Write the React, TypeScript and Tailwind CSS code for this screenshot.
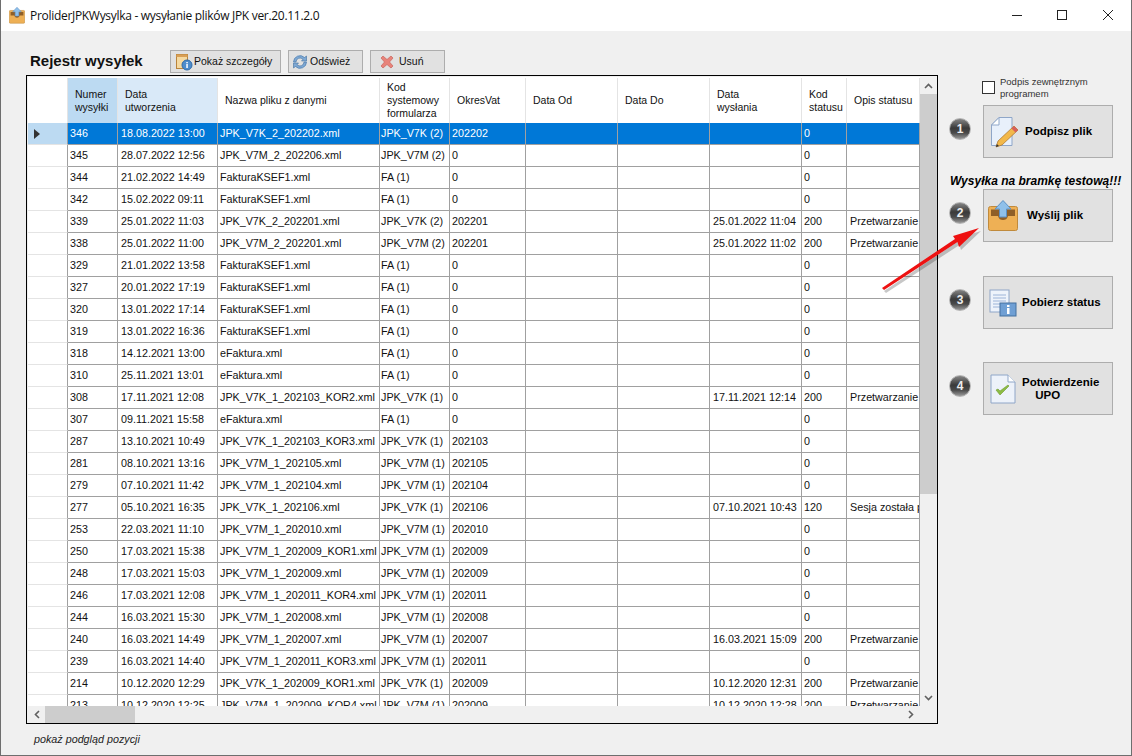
import type { ReactNode } from "react";

const sans = "font-['Liberation_Sans',Arial,sans-serif]";

const cols = "grid grid-cols-[40px_50px_100px_162px_70px_76px_92px_92px_92px_45px_73px]";

const PRZ = "Przetwarzanie dokumentu";

type Row = [string, string, string, string, string, string?, string?, string?];

const rows: Row[] = [
  ["346", "18.08.2022 13:00", "JPK_V7K_2_202202.xml", "JPK_V7K (2)", "202202", "", "0", ""],
  ["345", "28.07.2022 12:56", "JPK_V7M_2_202206.xml", "JPK_V7M (2)", "0", "", "0", ""],
  ["344", "21.02.2022 14:49", "FakturaKSEF1.xml", "FA (1)", "0", "", "0", ""],
  ["342", "15.02.2022 09:11", "FakturaKSEF1.xml", "FA (1)", "0", "", "0", ""],
  ["339", "25.01.2022 11:03", "JPK_V7K_2_202201.xml", "JPK_V7K (2)", "202201", "25.01.2022 11:04", "200", PRZ],
  ["338", "25.01.2022 11:00", "JPK_V7M_2_202201.xml", "JPK_V7M (2)", "202201", "25.01.2022 11:02", "200", PRZ],
  ["329", "21.01.2022 13:58", "FakturaKSEF1.xml", "FA (1)", "0", "", "0", ""],
  ["327", "20.01.2022 17:19", "FakturaKSEF1.xml", "FA (1)", "0", "", "0", ""],
  ["320", "13.01.2022 17:14", "FakturaKSEF1.xml", "FA (1)", "0", "", "0", ""],
  ["319", "13.01.2022 16:36", "FakturaKSEF1.xml", "FA (1)", "0", "", "0", ""],
  ["318", "14.12.2021 13:00", "eFaktura.xml", "FA (1)", "0", "", "0", ""],
  ["310", "25.11.2021 13:01", "eFaktura.xml", "FA (1)", "0", "", "0", ""],
  ["308", "17.11.2021 12:08", "JPK_V7K_1_202103_KOR2.xml", "JPK_V7K (1)", "0", "17.11.2021 12:14", "200", PRZ],
  ["307", "09.11.2021 15:58", "eFaktura.xml", "FA (1)", "0", "", "0", ""],
  ["287", "13.10.2021 10:49", "JPK_V7K_1_202103_KOR3.xml", "JPK_V7K (1)", "202103", "", "0", ""],
  ["281", "08.10.2021 13:16", "JPK_V7M_1_202105.xml", "JPK_V7M (1)", "202105", "", "0", ""],
  ["279", "07.10.2021 11:42", "JPK_V7M_1_202104.xml", "JPK_V7M (1)", "202104", "", "0", ""],
  ["277", "05.10.2021 16:35", "JPK_V7K_1_202106.xml", "JPK_V7K (1)", "202106", "07.10.2021 10:43", "120", "Sesja została przyjęta"],
  ["253", "22.03.2021 11:10", "JPK_V7M_1_202010.xml", "JPK_V7M (1)", "202010", "", "0", ""],
  ["250", "17.03.2021 15:38", "JPK_V7M_1_202009_KOR1.xml", "JPK_V7M (1)", "202009", "", "0", ""],
  ["248", "17.03.2021 15:03", "JPK_V7M_1_202009.xml", "JPK_V7M (1)", "202009", "", "0", ""],
  ["246", "17.03.2021 12:08", "JPK_V7M_1_202011_KOR4.xml", "JPK_V7M (1)", "202011", "", "0", ""],
  ["244", "16.03.2021 15:30", "JPK_V7M_1_202008.xml", "JPK_V7M (1)", "202008", "", "0", ""],
  ["240", "16.03.2021 14:49", "JPK_V7M_1_202007.xml", "JPK_V7M (1)", "202007", "16.03.2021 15:09", "200", PRZ],
  ["239", "16.03.2021 14:40", "JPK_V7M_1_202011_KOR3.xml", "JPK_V7M (1)", "202011", "", "0", ""],
  ["214", "10.12.2020 12:29", "JPK_V7K_1_202009_KOR1.xml", "JPK_V7K (1)", "202009", "10.12.2020 12:31", "200", PRZ],
  ["213", "10.12.2020 12:25", "JPK_V7M_1_202009_KOR4.xml", "JPK_V7M (1)", "202009", "10.12.2020 12:28", "200", PRZ],
];

function Head({ children, className = "" }: { children: ReactNode; className?: string }) {
  return (
    <div className={`flex items-center border-r border-[#e4e4e4] pl-[7px] text-[10.5px] leading-[13px] text-[#111] ${className}`}>
      <div>{children}</div>
    </div>
  );
}

function Cell({ children, sel, className = "pl-[2px]" }: { children?: ReactNode; sel: boolean; className?: string }) {
  return (
    <div
      className={`flex items-center overflow-hidden whitespace-nowrap border-r border-b border-[#a0a0a0] text-[10.75px] ${className} ${
        sel ? "bg-[#0078d7] text-white" : "bg-white text-[#111]"
      }`}
    >
      {children}
    </div>
  );
}

function Tool({ icon, label, className }: { icon: ReactNode; label: string; className: string }) {
  return (
    <button className={`flex h-[23px] items-center border border-[#adadad] bg-[#e1e1e1] text-[10.5px] text-[#111] ${className}`}>
      {icon}
      {label}
    </button>
  );
}

function Step({ n, icon, children, top }: { n: number; icon: ReactNode; children: ReactNode; top: string }) {
  return (
    <div className={`flex items-center ${top}`}>
      <div className="mb-[5px] flex h-[22px] w-[22px] items-center justify-center rounded-full border border-[#b5b5b5] bg-[linear-gradient(#858585,#3a3a3a_45%,#4a4a4a_70%,#9a9a9a)] text-[12px] font-bold text-[#eee]">
        {n}
      </div>
      <button className="ml-[12px] flex h-[53px] w-[130px] items-center border border-[#adadad] bg-[#e1e1e1] text-[11.5px] font-bold leading-[13px] text-black">
        {icon}
        {children}
      </button>
    </div>
  );
}

function BoxIcon({ size = 30 }: { size?: number }) {
  return (
    <svg width={size} height={size * 31 / 30} viewBox="0 0 30 31">
      <rect x="0.500" y="6.500" width="29" height="24" rx="2" fill="#eeb055" stroke="#c08a3c" />
      <path d="M3 9.500h24V16h-7c-1 3-2.500 4-5 4s-4-1-5-4H3z" fill="#8f5f28" />
      <path d="M15 0.500L23 9h-4.500v8h-7V9H7z" fill="#8fc0ea" stroke="#5c90c4" />
    </svg>
  );
}

export default function App() {
  return (
    <div className={`flex h-[756px] w-[1132px] flex-col overflow-hidden border-x border-b border-[#6e6e6e] bg-[#f0f0f0] ${sans}`}>
      {/* Title bar */}
      <div className="flex h-[31px] shrink-0 items-center bg-white pl-[8px]">
        <BoxIcon size={16} />
        <span className="ml-[5px] font-['Open_Sans',sans-serif] text-[12px] tracking-[-0.3px] text-[#111]">
          ProliderJPKWysylka - wysyłanie plików JPK ver.20.11.2.0
        </span>
        <div className="ml-auto flex items-center">
          <svg width="110" height="16" viewBox="0 0 110 16" className="mr-[13px]" fill="none" stroke="#222">
            <path d="M4 7.500h10" />
            <rect x="49.500" y="2.500" width="9" height="9" />
            <path d="M95 2l10 10M105 2L95 12" />
          </svg>
        </div>
      </div>

      <div className="relative flex flex-1">
        {/* Left column */}
        <div className="ml-[25px] flex w-[912px] flex-col">
          <div className="mt-[19px] flex h-[23px] items-center">
            <h1 className="ml-[4px] w-[140px] text-[15px] font-bold text-[#111]">Rejestr wysyłek</h1>
            <Tool
              className="w-[111px] pl-[4px]"
              label="Pokaż szczegóły"
              icon={
                <svg width="18" height="18" viewBox="0 0 18 18" className="mr-[1px]">
                  <rect x="1.500" y="1.500" width="11" height="14" fill="#f5d9a0" stroke="#b9843c" />
                  <rect x="1.500" y="1.500" width="11" height="2.500" fill="#d99f55" />
                  <circle cx="12" cy="12" r="5" fill="#4d8ccc" stroke="#2f6aa8" />
                  <rect x="11.300" y="11" width="1.500" height="4" fill="#fff" />
                  <rect x="11.300" y="9" width="1.500" height="1.300" fill="#fff" />
                </svg>
              }
            />
            <Tool
              className="ml-[7px] w-[75px] pl-[3px]"
              label="Odśwież"
              icon={
                <svg width="16" height="16" viewBox="0 0 16 16" className="mr-[2px]" fill="none">
                  <circle cx="8" cy="8" r="5.500" stroke="#cfe0f2" strokeWidth="2.500" />
                  <path d="M1.500 8A6.500 6.500 0 0 1 12.500 3.500L14.500 2v5h-5l1.500-1.600A4 4 0 0 0 4 8z" fill="#7fa9d4" stroke="#3f6f9f" strokeWidth=".6" />
                  <path d="M14.500 8A6.500 6.500 0 0 1 3.500 12.500L1.500 14V9h5L5 10.600A4 4 0 0 0 12 8z" fill="#7fa9d4" stroke="#3f6f9f" strokeWidth=".6" />
                </svg>
              }
            />
            <Tool
              className="ml-[7px] w-[75px] pl-[9px]"
              label="Usuń"
              icon={
                <svg width="14" height="14" viewBox="0 0 14 14" className="mr-[5px]">
                  <path d="M3 1l4 3.500L11 1l2 2-3.500 4L13 11l-2 2-4-3.500L3 13l-2-2 3.500-4L1 3z" fill="#e8837a" stroke="#c9645c" strokeWidth=".7" />
                </svg>
              }
            />
          </div>

          {/* Data grid */}
          <div className="mt-[2px] flex h-[649px] flex-col border border-black bg-[#f0f0f0] pl-[1px] pt-[1px]">
            <div className="flex min-h-0 flex-1">
              <div className="w-[892px] overflow-hidden bg-white pt-[1px]">
                <div className={`${cols} h-[45px] bg-white`}>
                  <div className="border-r border-[#e4e4e4]" />
                  <Head className="bg-[#bcdaf2]">Numer<br />wysyłki</Head>
                  <Head className="bg-[#d9e9f8]">Data<br />utworzenia</Head>
                  <Head>Nazwa pliku z danymi</Head>
                  <Head>Kod<br />systemowy<br />formularza</Head>
                  <Head>OkresVat</Head>
                  <Head>Data Od</Head>
                  <Head>Data Do</Head>
                  <Head>Data<br />wysłania</Head>
                  <Head>Kod<br />statusu</Head>
                  <Head>Opis statusu</Head>
                </div>
                {rows.map((r, i) => {
                  const sel = i === 0;
                  return (
                    <div key={r[0]} className={`${cols} h-[22px]`}>
                      <div className={`flex items-center border-b border-r border-b-[#e4e4e4] border-r-[#a0a0a0] pl-[6px] ${sel ? "bg-[#bcdaf2]" : "bg-white"}`}>
                        {sel && (
                          <svg width="6" height="10" viewBox="0 0 6 10">
                            <path d="M0 0l6 5-6 5z" fill="#333" />
                          </svg>
                        )}
                      </div>
                      <Cell sel={sel}>{r[0]}</Cell>
                      <Cell sel={sel} className="pl-[3px]">{r[1]}</Cell>
                      <Cell sel={sel}>{r[2]}</Cell>
                      <Cell sel={sel} className="pl-[1px]">{r[3]}</Cell>
                      <Cell sel={sel}>{r[4]}</Cell>
                      <Cell sel={sel} />
                      <Cell sel={sel} />
                      <Cell sel={sel} className="pl-[3px]">{r[5]}</Cell>
                      <Cell sel={sel}>{r[6]}</Cell>
                      <Cell sel={sel} className="pl-[3px]">{r[7]}</Cell>
                    </div>
                  );
                })}
              </div>
              {/* Vertical scrollbar */}
              <div className="flex w-[17px] flex-col">
                <div className="flex h-[17px] items-center justify-center">
                  <svg width="9" height="6" viewBox="0 0 9 6" fill="none" stroke="#606060" strokeWidth="1.600">
                    <path d="M1 5l3.500-3.500L8 5" />
                  </svg>
                </div>
                <div className="h-[400px] bg-[#cdcdcd]" />
                <div className="mt-auto flex h-[17px] items-center justify-center">
                  <svg width="9" height="6" viewBox="0 0 9 6" fill="none" stroke="#606060" strokeWidth="1.600">
                    <path d="M1 1l3.500 3.500L8 1" />
                  </svg>
                </div>
              </div>
            </div>
            {/* Horizontal scrollbar */}
            <div className="flex h-[17px] shrink-0 items-center">
              <div className="flex w-[17px] justify-center">
                <svg width="6" height="9" viewBox="0 0 6 9" fill="none" stroke="#606060" strokeWidth="1.600">
                  <path d="M5 1L1.500 4.500 5 8" />
                </svg>
              </div>
              <div className="h-full w-[90px] bg-[#cdcdcd]" />
              <div className="ml-auto mr-[23px]">
                <svg width="6" height="9" viewBox="0 0 6 9" fill="none" stroke="#606060" strokeWidth="1.600">
                  <path d="M1 1l3.500 3.500L1 8" />
                </svg>
              </div>
            </div>
          </div>

          <p className="ml-[8px] mt-[7px] text-[10.75px] italic text-[#222]">pokaż podgląd pozycji</p>
        </div>

        {/* Right column */}
        <div className="ml-[11px] flex w-[180px] flex-col">
          <label className="ml-[33px] mt-[45px] flex items-start text-[9.5px] leading-[12px] text-[#333]">
            <span className="mt-[5px] h-[13px] w-[13px] shrink-0 border border-[#333] bg-white" />
            <span className="ml-[5px]">
              Podpis zewnętrznym
              <br />
              programem
            </span>
          </label>
          <Step
            n={1}
            top="mt-[5px]"
            icon={
              <svg width="30" height="32" viewBox="0 0 30 32" className="ml-[5px] mr-[6px]">
                <path d="M2.500 9L10 1.500h13v28h-20.500z" fill="#e8f0fb" stroke="#8fa6c8" />
                <path d="M2.500 9H10V1.500z" fill="#fff" stroke="#8fa6c8" />
                <path d="M25 10l4 4-16 15-6 2 2-6z" fill="#f2b84a" stroke="#a8702a" strokeWidth=".7" />
                <path d="M25 10l4 4-2.500 2.500-4-4z" fill="#d8605a" />
                <path d="M7 31l.8-3 2.200 2z" fill="#333" />
              </svg>
            }
          >
            Podpisz plik
          </Step>
          <p className="ml-[1px] mt-[15px] h-[16px] whitespace-nowrap text-[12px] font-bold italic leading-[16px] text-black">
            Wysyłka na bramkę testową!!!
          </p>
          <Step
            n={2}
            top=""
            icon={
              <span className="ml-[4px] mr-[9px] flex">
                <BoxIcon />
              </span>
            }
          >
            Wyślij plik
          </Step>
          <Step
            n={3}
            top="mt-[34px]"
            icon={
              <svg width="28" height="28" viewBox="0 0 28 28" className="ml-[5px] mr-[5px]">
                <rect x="1" y="1" width="19" height="22" fill="#eef3fb" stroke="#8fa6c8" />
                <path d="M4 6h13M4 9h13M4 12h13M4 15h8M4 18h8" stroke="#9db4d8" />
                <rect x="11" y="14" width="16" height="13" fill="#6f9fd4" stroke="#44709f" />
                <rect x="18" y="19" width="2.500" height="6" fill="#fff" />
                <rect x="18" y="16" width="2.500" height="2" fill="#fff" />
              </svg>
            }
          >
            Pobierz status
          </Step>
          <Step
            n={4}
            top="mt-[33px]"
            icon={
              <svg width="26" height="30" viewBox="0 0 26 30" className="ml-[6px] mr-[6px]">
                <path d="M1 1h17l7 7v21H1z" fill="#edf2fa" stroke="#8fa6c8" />
                <path d="M18 1v7h7" fill="#fff" stroke="#8fa6c8" />
                <path d="M6 16l4 5 9-9-1-1-8 6-2-2z" fill="#8cbc45" stroke="#6f9a30" strokeWidth=".6" />
              </svg>
            }
          >
            <span className="text-center">
              Potwierdzenie
              <br />
              <span className="mr-[26px]">UPO</span>
            </span>
          </Step>
        </div>

        {/* Red arrow drawn over the grid */}
        <svg width="110" height="75" viewBox="875 220 110 75" className="absolute left-[874px] top-[189px]">
          <path d="M884 291L957 242L955 239L981 231L961 250L959.500 245L886 293z" fill="#000" opacity=".22" />
          <path d="M882 288L955 239L953 236L979 228L959 247L957.500 242L884 290z" fill="#ee1111" />
        </svg>
      </div>
    </div>
  );
}
